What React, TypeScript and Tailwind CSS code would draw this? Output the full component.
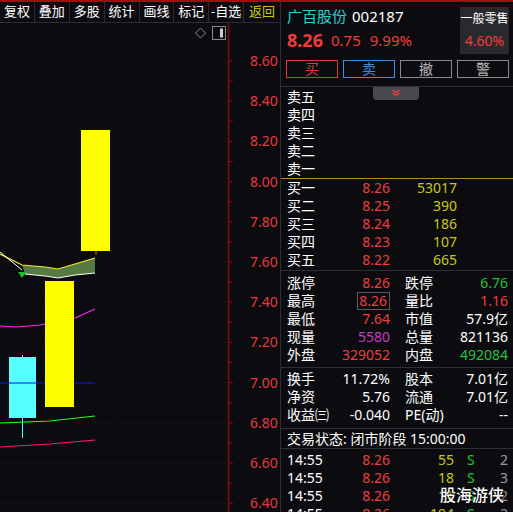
import React from 'react'

// ─── palette ────────────────────────────────────────────────────────────
const RED = 'text-[#f23c3c]'
const GREEN = 'text-[#1fc43c]'
const YEL = 'text-[#c9c913]'

const tabs = ['复权', '叠加', '多股', '统计', '画线', '标记', '-自选', '返回']

// price → page y (8.60 sits at y=61, 0.20 per 40px)
const py = (p: number) => 61 + (8.6 - p) * 201

function Chart() {
  const levels = [8.6, 8.4, 8.2, 8.0, 7.8, 7.6, 7.4, 7.2, 7.0, 6.8, 6.6, 6.4]
  const ticks = Array.from({ length: 23 }, (_, i) => 61 + i * 20.1)
  return (
    <svg width="280" height="489" viewBox="0 23 280 489" className="block">
      {levels.map((l) => (
        <line
          key={l}
          x1="0"
          x2="226"
          y1={py(l)}
          y2={py(l)}
          stroke="#4a1414"
          strokeDasharray="1 3"
        />
      ))}
      {/* axis */}
      <line x1="228.5" x2="228.5" y1="23" y2="512" stroke="#8a0a0a" strokeWidth="1.5" />
      {ticks.map((t) => (
        <line key={t} x1="229" x2="233" y1={t} y2={t} stroke="#8a0a0a" />
      ))}
      {levels.map((l) => (
        <text
          key={l}
          x="250"
          y={py(l) + 5}
          fill="#e8383d"
          fontSize="14"
          fontFamily="Noto Sans, sans-serif"
        >
          {l.toFixed(2)}
        </text>
      ))}

      {/* corner icons */}
      <path d="M200.5 28 L205.5 33 L200.5 38 L195.5 33 Z" fill="none" stroke="#8a8a8a" />
      <rect x="212.5" y="26.5" width="13" height="13" fill="none" stroke="#8a8a8a" />
      <rect x="220" y="28.5" width="3" height="9" fill="#d0d0d0" />

      {/* moving averages */}
      <polyline points="0,447 50,444 95,440" fill="none" stroke="#ff1a7a" strokeWidth="1.2" />
      <polyline points="0,423 50,421 95,416" fill="none" stroke="#22ff22" strokeWidth="1.2" />
      <polyline points="0,326 17,327 40,325 75,318 95,309" fill="none" stroke="#ff22ff" strokeWidth="1.2" />

      {/* cloud */}
      <polygon
        points="22,265 45,267 58,269 75,264 95,258 95,273 75,275 58,278 45,276 25,274"
        fill="#567a43"
      />
      <polyline points="0,254 22,265 45,267 58,269 75,264 95,258" fill="none" stroke="#f0f020" strokeWidth="1.2" />
      <polyline points="0,252 22,270" fill="none" stroke="#ffffff" strokeWidth="1" />
      <polyline points="25,274 45,276 58,278 75,275 95,273" fill="none" stroke="#ffffff" strokeWidth="1" />
      <path d="M18 272 L26 272 L22 278 Z" fill="#22c022" />

      {/* candles */}
      <line x1="22.5" x2="22.5" y1="355" y2="438" stroke="#55ffff" />
      <rect x="9" y="357" width="27" height="61" fill="#55ffff" />
      <line x1="0" x2="95" y1="383" y2="383" stroke="#0a10ff" strokeWidth="1.2" />
      <rect x="45" y="281" width="29" height="126" fill="#ffff00" />
      <line x1="96" x2="96" y1="251" y2="255" stroke="#ff4040" />
      <rect x="81" y="130" width="29" height="121" fill="#ffff00" />
    </svg>
  )
}

function Row({ children, className = '' }: { children: React.ReactNode; className?: string }) {
  return <div className={`flex h-[18px] items-center pl-[6px] leading-[18px] ${className}`}>{children}</div>
}

function Book({ label, price, vol }: { label: string; price?: string; vol?: string }) {
  return (
    <Row>
      <span className="w-[50px] text-white">{label}</span>
      <span className={`w-[53px] text-right ${RED}`}>{price}</span>
      <span className={`w-[67px] text-right ${YEL}`}>{vol}</span>
    </Row>
  )
}

function Stat({
  a,
  av,
  ac,
  b,
  bv,
  bc,
  boxed,
}: {
  a: string
  av: string
  ac: string
  b: string
  bv: string
  bc: string
  boxed?: boolean
}) {
  return (
    <Row>
      <span className="w-[50px] text-white">{a}</span>
      <span className={`w-[53px] text-right ${ac}`}>
        {boxed ? (
          <span className="inline-block h-[18px] border border-[#5a5a5a] pl-[1px] pr-[2px] leading-[16px]">{av}</span>
        ) : (
          av
        )}
      </span>
      <span className="ml-[15px] w-[50px] text-white">{b}</span>
      <span className={`w-[53px] text-right ${bc}`}>{bv}</span>
    </Row>
  )
}

function Trade({ vol, n }: { vol: string; n: string }) {
  return (
    <Row>
      <span className="w-[50px] text-white">14:55</span>
      <span className={`w-[53px] text-right ${RED}`}>8.26</span>
      <span className={`w-[64px] text-right ${YEL}`}>{vol}</span>
      <span className={`ml-[13px] w-[12px] ${GREEN}`}>S</span>
      <span className="w-[29px] text-right text-[#9a9aa4]">{n}</span>
    </Row>
  )
}

const btn = 'flex h-[18px] w-[52px] items-center justify-center border text-[14px] leading-none'

export default function App() {
  return (
    <div className="h-[512px] w-[513px] overflow-hidden bg-[#0c0c10] font-['Noto_Sans','Noto_Sans_CJK_SC',sans-serif] text-[14px]">
      <div className="h-[2px] bg-[#a30e0e]" />
      <div className="flex h-[510px]">
        {/* ─── chart side ─── */}
        <div className="w-[280px] shrink-0">
          <div className="flex h-[21px] border-b border-[#2c2c30]">
            {tabs.map((t, i) => (
              <div
                key={t}
                className={`flex h-[20px] items-center justify-center text-[13px] ${
                  i === tabs.length - 1 ? 'w-[36px] text-[#c8c814]' : 'w-[35px] border-r border-[#2c2c30] text-white'
                }`}
              >
                {t}
              </div>
            ))}
          </div>
          <Chart />
        </div>

        {/* ─── quote side ─── */}
        <div className="relative flex-1 border-l border-[#2e2e33]">
          <div className="flex h-[58px] justify-between">
            <div className="pl-[6px] pt-[3px]">
              <div className="flex h-[22px] items-center text-[15px]">
                <span className="text-[#28d2d2]">广百股份</span>
                <span className="ml-[5px] text-white">002187</span>
              </div>
              <div className={`flex h-[26px] items-center ${RED}`}>
                <span className="text-[18px] font-bold">8.26</span>
                <span className="ml-[8px] text-[15px]">0.75</span>
                <span className="ml-[9px] text-[15px]">9.99%</span>
              </div>
            </div>
            <div className="mr-[4px] mt-[5px] flex h-[47px] w-[49px] flex-col items-center bg-[#2a2a2e]">
              <span className="mt-[3px] whitespace-nowrap text-[12px] leading-[18px] text-white">一般零售</span>
              <span className={`mt-[4px] text-[14px] leading-[18px] ${RED}`}>4.60%</span>
            </div>
          </div>

          <div className="flex gap-[5px] pl-[5px]">
            <div className={`${btn} border-[#e0393b] text-[#e0393b]`}>买</div>
            <div className={`${btn} border-[#3b8ee0] text-[#3b8ee0]`}>卖</div>
            <div className={`${btn} border-[#8a8a8a] text-[#b8b8b8]`}>撤</div>
            <div className={`${btn} border-[#8a8a8a] text-[#b8b8b8]`}>警</div>
          </div>

          {/* order book */}
          <div className="mt-[8px] border-t border-[#2e2e33] pt-[1px]">
            <Book label="卖五" />
            <Book label="卖四" />
            <Book label="卖三" />
            <Book label="卖二" />
            <Book label="卖一" />
          </div>
          <div className="absolute left-[92px] top-[85px] flex h-[13px] w-[46px] items-start justify-center rounded-b-[4px] bg-[#48484e]">
            <svg width="10" height="8" viewBox="0 0 10 8" className="mt-[2px]">
              <path d="M1.5 1 L5 3.5 L8.5 1 M1.5 4 L5 6.5 L8.5 4" fill="none" stroke="#ff3a3a" strokeWidth="1.2" />
            </svg>
          </div>
          <div className="border-t border-[#b8862b]">
            <Book label="买一" price="8.26" vol="53017" />
            <Book label="买二" price="8.25" vol="390" />
            <Book label="买三" price="8.24" vol="186" />
            <Book label="买四" price="8.23" vol="107" />
            <Book label="买五" price="8.22" vol="665" />
          </div>

          {/* stats */}
          <div className="mt-[1px] border-t border-[#2e2e33] pt-[3px]">
            <Stat a="涨停" av="8.26" ac={RED} b="跌停" bv="6.76" bc={GREEN} />
            <Stat a="最高" av="8.26" ac={RED} b="量比" bv="1.16" bc={RED} boxed />
            <Stat a="最低" av="7.64" ac={RED} b="市值" bv="57.9亿" bc="text-white" />
            <Stat a="现量" av="5580" ac="text-[#c43cc4]" b="总量" bv="821136" bc="text-white" />
            <Stat a="外盘" av="329052" ac={RED} b="内盘" bv="492084" bc={GREEN} />
          </div>
          <div className="mt-[3px] border-t border-[#2e2e33] pt-[2px]">
            <Stat a="换手" av="11.72%" ac="text-white" b="股本" bv="7.01亿" bc="text-white" />
            <Stat a="净资" av="5.76" ac="text-white" b="流通" bv="7.01亿" bc="text-white" />
            <Stat a="收益㈢" av="-0.040" ac="text-white" b="PE(动)" bv="--" bc="text-white" />
          </div>

          <div className="mt-[4px] flex h-[21px] items-center border-y border-[#2e2e33] pl-[6px] text-white">
            交易状态: 闭市阶段 15:00:00
          </div>
          <div className="pt-[2px]">
            <Trade vol="55" n="2" />
            <Trade vol="18" n="3" />
            <Trade vol="11" n="2" />
            <Trade vol="194" n="2" />
          </div>

          <div className="absolute left-[159px] top-[481px] text-[16px] font-medium text-white [text-shadow:1px_1px_2px_#000]">
            股海游侠
          </div>
        </div>
      </div>
    </div>
  )
}
